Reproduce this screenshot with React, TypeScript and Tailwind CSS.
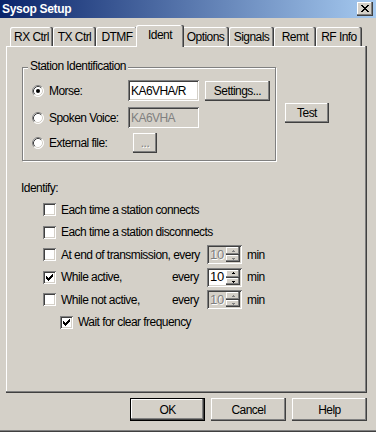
import React from "react";

const RAISED =
  "shadow-[inset_-1px_-1px_0_#404040,inset_-2px_-2px_0_#808080,inset_1px_1px_0_#ffffff]";
const DEFBTN =
  "shadow-[inset_0_0_0_1px_#000000,inset_-2px_-2px_0_#404040,inset_-3px_-3px_0_#808080,inset_2px_2px_0_#ffffff]";
const SUNKEN =
  "shadow-[inset_1px_1px_0_#808080,inset_-1px_-1px_0_#ffffff,inset_2px_2px_0_#404040,inset_-2px_-2px_0_#d4d0c8]";

function Btn({
  children,
  className = "",
  def = false,
}: {
  children: React.ReactNode;
  className?: string;
  def?: boolean;
}) {
  return (
    <div
      className={`flex shrink-0 items-center justify-center bg-[#d4d0c8] ${
        def ? DEFBTN : RAISED
      } ${className}`}
    >
      {children}
    </div>
  );
}

function Radio({ checked = false }: { checked?: boolean }) {
  return (
    <svg width="12" height="12" viewBox="0 0 12 12" className="shrink-0">
      <circle cx="6" cy="6" r="5.5" fill="#ffffff" />
      <path d="M9.89 2.11 A5.5 5.5 0 0 0 2.11 9.89" stroke="#808080" fill="none" />
      <path d="M2.11 9.89 A5.5 5.5 0 0 0 9.89 2.11" stroke="#ffffff" fill="none" />
      <path d="M9.18 2.82 A4.5 4.5 0 0 0 2.82 9.18" stroke="#404040" fill="none" />
      <path d="M2.82 9.18 A4.5 4.5 0 0 0 9.18 2.82" stroke="#d4d0c8" fill="none" />
      {checked && <circle cx="6" cy="6" r="2" fill="#000000" />}
    </svg>
  );
}

function Check({ checked = false }: { checked?: boolean }) {
  const cols = [2, 3, 4, 3, 2, 1, 0];
  return (
    <div className={`relative h-[13px] w-[13px] shrink-0 bg-white ${SUNKEN}`}>
      {checked && (
        <svg
          width="13"
          height="13"
          viewBox="0 0 13 13"
          className="absolute left-0 top-0"
          shapeRendering="crispEdges"
        >
          {cols.map((y, i) => (
            <rect key={i} x={3 + i} y={3 + y} width="1" height="3" fill="#000000" />
          ))}
        </svg>
      )}
    </div>
  );
}

function Arrow({ up, disabled }: { up: boolean; disabled: boolean }) {
  const c = disabled ? "#808080" : "#000000";
  return (
    <svg width="5" height="3" viewBox="0 0 5 3" shapeRendering="crispEdges">
      {up ? (
        <>
          <rect x="2" y="0" width="1" height="1" fill={c} />
          <rect x="1" y="1" width="3" height="1" fill={c} />
        </>
      ) : (
        <>
          <rect x="1" y="1" width="3" height="1" fill={c} />
          <rect x="2" y="2" width="1" height="1" fill={c} />
        </>
      )}
    </svg>
  );
}

function Spinner({ disabled = false }: { disabled?: boolean }) {
  return (
    <div
      className={`flex h-[19px] w-[35px] shrink-0 p-[2px] ${SUNKEN} ${
        disabled ? "bg-[#d4d0c8]" : "bg-white"
      }`}
    >
      <div
        className={`flex flex-1 items-center pl-[1px] text-[13px] tracking-[-0.3px] ${
          disabled ? "text-[#808080] [text-shadow:1px_1px_0_#ffffff]" : "text-black"
        }`}
      >
        10
      </div>
      <div className="flex w-[14px] flex-col">
        <div className={`flex h-[8px] items-center justify-center bg-[#d4d0c8] ${RAISED}`}>
          <Arrow up disabled={disabled} />
        </div>
        <div className={`flex h-[7px] items-center justify-center bg-[#d4d0c8] ${RAISED}`}>
          <Arrow up={false} disabled={disabled} />
        </div>
      </div>
    </div>
  );
}

const TAB =
  "shadow-[inset_-1px_0_0_#404040,inset_-2px_0_0_#808080,inset_1px_1px_0_#ffffff]";

function Tab({ label, w, selected = false }: { label: string; w: string; selected?: boolean }) {
  if (selected) {
    return (
      <div
        className={`relative z-10 -mx-[2px] -mb-[1px] flex h-[22px] shrink-0 items-center justify-center rounded-t-[2px] bg-[#d4d0c8] pb-[2px] ${TAB} ${w}`}
      >
        {label}
      </div>
    );
  }
  return (
    <div
      className={`flex h-[19px] shrink-0 items-center justify-center rounded-t-[2px] bg-[#d4d0c8] pt-[1px] ${TAB} ${w}`}
    >
      {label}
    </div>
  );
}

export default function App() {
  return (
    <div className="flex h-[432px] w-[376px] flex-col overflow-hidden bg-[#d4d0c8] font-['Liberation_Sans',Arial,sans-serif] text-[12px] leading-[14px] tracking-[-0.55px] text-black">
      {/* Title bar */}
      <div className="flex h-[18px] shrink-0 items-center justify-between bg-linear-to-r/srgb from-[#0a246a] to-[#a6caf0] pl-[2px] pr-[3px]">
        <span className="text-[12px] font-bold tracking-[-0.3px] text-white">Sysop Setup</span>
        <div className={`flex h-[14px] w-[16px] items-center justify-center bg-[#d4d0c8] ${RAISED}`}>
          <svg width="8" height="7" viewBox="0 0 8 7" shapeRendering="crispEdges" className="-mt-px">
            <path
              d="M0 0h2v1h1v1h2v-1h1v-1h2v1h-1v1h-1v1h-1v1h1v1h1v1h1v1h-2v-1h-1v-1h-2v1h-1v1h-2v-1h1v-1h1v-1h1v-1h-1v-1h-1v-1h-1z"
              fill="#000000"
            />
          </svg>
        </div>
      </div>

      {/* Tabs + panel */}
      <div className="ml-[6px] mt-[7px] flex flex-col">
        <div className="flex h-[21px] items-end pl-[4px]">
          <Tab label="RX Ctrl" w="w-[43px]" />
          <Tab label="TX Ctrl" w="w-[43px]" />
          <Tab label="DTMF" w="w-[42px]" />
          <Tab label="Ident" w="w-[48px]" selected />
          <Tab label="Options" w="w-[47px]" />
          <Tab label="Signals" w="w-[45px]" />
          <Tab label="Remt" w="w-[42px]" />
          <Tab label="RF Info" w="w-[46px]" />
        </div>

        <div className="flex h-[347px] w-[361px] flex-col bg-[#d4d0c8] pl-[16px] pt-[21px] shadow-[inset_-1px_-1px_0_#404040,inset_-2px_-2px_0_#808080,inset_1px_1px_0_#ffffff]">
          <div className="flex items-start">
            {/* Station Identification group */}
            <div className="relative h-[94px] w-[254px] shrink-0 border border-[#808080] pl-[9px] pt-[12px] shadow-[inset_1px_1px_0_#ffffff,1px_1px_0_#ffffff]">
              <span className="absolute left-[5px] top-[-9px] bg-[#d4d0c8] px-[2px]">
                Station Identification
              </span>
              <div className="flex h-[21px] items-center">
                <Radio checked />
                <span className="ml-[5px] w-[79px] shrink-0">Morse:</span>
                <div className={`flex h-[21px] w-[71px] shrink-0 items-center bg-white pl-[3px] ${SUNKEN}`}>
                  KA6VHA/R
                </div>
                <Btn className="ml-[6px] h-[20px] w-[65px]">Settings...</Btn>
              </div>
              <div className="mt-[6px] flex h-[21px] items-center">
                <Radio />
                <span className="ml-[5px] w-[79px] shrink-0">Spoken Voice:</span>
                <div
                  className={`flex h-[21px] w-[71px] shrink-0 items-center bg-[#d4d0c8] pl-[3px] text-[#808080] ${SUNKEN}`}
                >
                  KA6VHA
                </div>
              </div>
              <div className="mt-[4px] flex h-[21px] items-center">
                <Radio />
                <span className="ml-[5px] w-[84px] shrink-0">External file:</span>
                <Btn className="h-[20px] w-[24px] text-[#808080] [text-shadow:1px_1px_0_#ffffff]">...</Btn>
              </div>
            </div>
            <Btn className="ml-[9px] mt-[36px] h-[20px] w-[44px]">Test</Btn>
          </div>

          <div className="-ml-[1px] mt-[20px]">Identify:</div>

          <div className="ml-[21px] mt-[3px] flex flex-col">
            <div className="flex h-[23px] items-center">
              <Check />
              <span className="ml-[5px]">Each time a station connects</span>
            </div>
            <div className="flex h-[22px] items-center">
              <Check />
              <span className="ml-[5px]">Each time a station disconnects</span>
            </div>
            <div className="flex h-[23px] items-center">
              <Check />
              <span className="ml-[5px] w-[146px] shrink-0">At end of transmission, every</span>
              <Spinner disabled />
              <span className="ml-[5px]">min</span>
            </div>
            <div className="flex h-[22px] items-center">
              <Check checked />
              <span className="ml-[5px] w-[111px] shrink-0">While active,</span>
              <span className="w-[35px] shrink-0">every</span>
              <Spinner />
              <span className="ml-[5px]">min</span>
            </div>
            <div className="flex h-[23px] items-center">
              <Check />
              <span className="ml-[5px] w-[111px] shrink-0">While not active,</span>
              <span className="w-[35px] shrink-0">every</span>
              <Spinner disabled />
              <span className="ml-[5px]">min</span>
            </div>
            <div className="flex h-[22px] items-center pl-[17px]">
              <Check checked />
              <span className="ml-[5px]">Wait for clear frequency</span>
            </div>
          </div>
        </div>
      </div>

      {/* Bottom buttons */}
      <div className="mt-[5px] flex justify-end gap-[6px] pr-[9px]">
        <Btn def className="h-[23px] w-[75px]">OK</Btn>
        <Btn className="h-[23px] w-[75px]">Cancel</Btn>
        <Btn className="h-[23px] w-[75px]">Help</Btn>
      </div>

      <div className="mt-auto h-[2px] border-b border-t border-b-[#404040] border-t-[#808080]" />
    </div>
  );
}
